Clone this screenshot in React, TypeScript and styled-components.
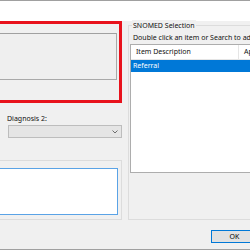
import React from "react";
import styled, { createGlobalStyle } from "styled-components";

const Global = createGlobalStyle`
  html, body { margin: 0; padding: 0; background: #f0f0f0; }
  body { font-family: "Noto Sans", "Open Sans", sans-serif; font-size: 7px; color: #000; }
`;

const Window = styled.div`
  width: 250px;
  height: 250px;
  overflow: hidden;
  display: flex;
  flex-direction: column;
  background: #f0f0f0;
`;

const Banner = styled.div`
  height: 20px;
  flex: none;
  background: #ffffff;
  border-top: 1px solid #a0a0a0;
`;

const Body = styled.div`
  flex: 1;
  display: flex;
  gap: 6px;
  min-height: 0;
`;

const LeftCol = styled.div`
  flex: none;
  width: 142px;
  margin-left: -20px;
  display: flex;
  flex-direction: column;
`;

const RightCol = styled.div`
  flex: none;
  width: 140px;
  display: flex;
  flex-direction: column;
`;

const Footer = styled.div`
  height: 1px;
  flex: none;
  background: #a0a0a0;
`;

const RedFrame = styled.div`
  height: 82px;
  box-sizing: border-box;
  border: 3px solid #e8121c;
  padding: 9px 2px 0 0;
`;

const InnerPanel = styled.div`
  height: 47px;
  box-sizing: border-box;
  border: 1px solid #a9a9a9;
  border-top-color: #a0a0a0;
  background: #efefef;
`;

const Label = styled.div`
  margin: 10px 0 0 27px;
  height: 12px;
  line-height: 12px;
  color: #111;
`;

const Combo = styled.div`
  margin: 0 0 0 28px;
  height: 13px;
  box-sizing: border-box;
  border: 1px solid #bdbdbd;
  background: #e5e5e5;
  display: flex;
  align-items: center;
  justify-content: flex-end;
  padding-right: 3px;
`;

const Group = styled.div<{ $top: number; $height: number }>`
  margin-top: ${(p) => p.$top}px;
  height: ${(p) => p.$height}px;
  box-sizing: border-box;
  border: 1px solid #dcdcdc;
`;

const LeftGroup = styled(Group)`
  padding: 7px 3px 4px 0;
`;

const Memo = styled.div`
  height: 100%;
  box-sizing: border-box;
  border: 1px solid #5aa3e6;
  background: #ffffff;
`;

const SnomedGroup = styled(Group)`
  padding: 0 0 0 1px;
  display: flex;
  flex-direction: column;
  border-right: none;
`;

const Legend = styled.div`
  align-self: flex-start;
  margin: -6px 0 0 2px;
  padding: 0 1px;
  height: 11px;
  line-height: 11px;
  background: #f0f0f0;
  color: #111;
`;

const Hint = styled.div`
  margin: 1px 0 0 3px;
  height: 12px;
  line-height: 12px;
  white-space: nowrap;
  color: #111;
`;

const ListView = styled.div`
  height: 129px;
  box-sizing: border-box;
  border: 1px solid #adadad;
  border-right: none;
  background: #ffffff;
  display: flex;
  flex-direction: column;
`;

const HeaderRow = styled.div`
  height: 14px;
  flex: none;
  display: flex;
  border-bottom: 1px solid #e5e5e5;
`;

const HeaderCell = styled.div<{ $w?: number }>`
  ${(p) => (p.$w ? `width: ${p.$w}px; flex: none;` : "flex: 1;")}
  box-sizing: border-box;
  padding-left: 5px;
  line-height: 14px;
  white-space: nowrap;
  overflow: hidden;
  border-right: 1px solid #e5e5e5;
  color: #111;
`;

const Row = styled.div<{ $selected?: boolean }>`
  height: 12px;
  line-height: 12px;
  padding-left: 2px;
  background: ${(p) => (p.$selected ? "#0078d7" : "transparent")};
  color: ${(p) => (p.$selected ? "#ffffff" : "#000")};
`;

const ButtonBar = styled.div`
  display: flex;
  justify-content: flex-start;
  padding: 10px 0 0 83px;
`;

const Button = styled.button`
  width: 47px;
  height: 13px;
  box-sizing: border-box;
  border: 1px solid #0078d7;
  background: #e1e1e1;
  font: inherit;
  padding: 0;
  line-height: 11px;
  color: #000;
  flex: none;
`;

const Chevron = () => (
  <svg width="6" height="4" viewBox="0 0 6 4">
    <path d="M0.5 0.5 L3 3 L5.5 0.5" fill="none" stroke="#6d6d6d" strokeWidth="1" />
  </svg>
);

export default function App() {
  return (
    <Window>
      <Global />
      <Banner />
      <Body>
        <LeftCol>
          <RedFrame>
            <InnerPanel />
          </RedFrame>
          <Label>Diagnosis 2:</Label>
          <Combo>
            <Chevron />
          </Combo>
          <LeftGroup $top={22} $height={60}>
            <Memo />
          </LeftGroup>
        </LeftCol>
        <RightCol>
          <SnomedGroup $top={4} $height={195}>
            <Legend>SNOMED Selection</Legend>
            <Hint>Double click an item or Search to add</Hint>
            <ListView>
              <HeaderRow>
                <HeaderCell $w={108}>Item Description</HeaderCell>
                <HeaderCell>Applies</HeaderCell>
              </HeaderRow>
              <Row $selected>Referral</Row>
            </ListView>
          </SnomedGroup>
          <ButtonBar>
            <Button>OK</Button>
          </ButtonBar>
        </RightCol>
      </Body>
      <Footer />
    </Window>
  );
}
